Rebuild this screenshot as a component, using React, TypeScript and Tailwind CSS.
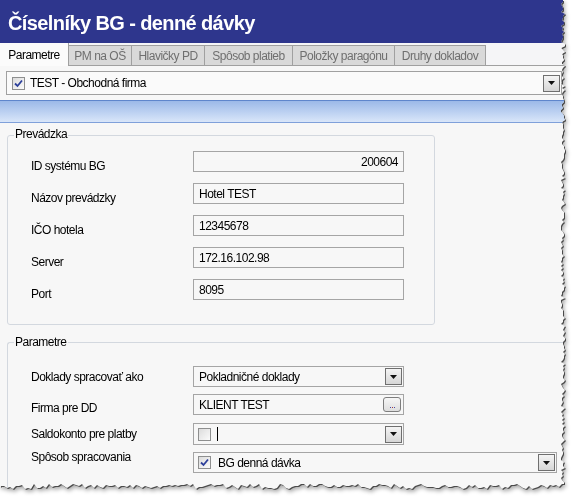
import React from "react";

const FONT = { fontFamily: '"Liberation Sans", Arial, sans-serif' };

function tornClip(): string {
  const pts: string[] = ["0px 0px"];
  let seed = 7;
  const rnd = () => {
    seed = (seed * 9301 + 49297) % 233280;
    return seed / 233280;
  };
  for (let y = 0; y <= 484; y += 2) {
    const x = 561 + Math.round(rnd() * 4);
    pts.push(`${x}px ${y}px`);
  }
  for (let x = 562; x >= 0; x -= 3) {
    const y = 484 + Math.round(rnd() * 5);
    pts.push(`${x}px ${y}px`);
  }
  pts.push("0px 487px");
  return `polygon(${pts.join(",")})`;
}

const clip = tornClip();

function DropBtn() {
  return (
    <div className="w-[17px] h-[17px] shrink-0 border border-[#6f6f6f] bg-gradient-to-b from-[#f4f4f4] to-[#d6d6d6] flex items-center justify-center">
      <svg width="7" height="4" viewBox="0 0 7 4">
        <path d="M0 0 H7 L3.5 4 Z" fill="#111" />
      </svg>
    </div>
  );
}

function Check({ checked }: { checked: boolean }) {
  return (
    <div className="w-[13px] h-[13px] shrink-0 border border-[#8e8f8f] bg-gradient-to-br from-[#dcdcdc] to-[#fbfbfb] flex items-center justify-center">
      {checked && (
        <svg width="9" height="9" viewBox="0 0 9 9">
          <path d="M1 4.5 L3.5 7 L8 1.5" stroke="#2c3f9a" strokeWidth="1.8" fill="none" />
        </svg>
      )}
    </div>
  );
}

function Field({ label, value, right }: { label: string; value: string; right?: boolean }) {
  return (
    <div className="flex items-start h-[32px]">
      <div className="w-[185px] pl-[23px] pt-[8px] text-[12px] text-black leading-[14px]">{label}</div>
      <div
        className={`w-[211px] h-[21px] border border-[#a5a5a5] flex items-center px-[5px] text-[12px] text-black ${
          right ? "justify-end" : ""
        }`}
      >
        {value}
      </div>
    </div>
  );
}

export default function App() {
  const tabs: [string, string][] = [
    ["PM na OŠ", "w-[63px]"],
    ["Hlavičky PD", "w-[73px]"],
    ["Spôsob platieb", "w-[88px]"],
    ["Položky paragónu", "w-[102px]"],
    ["Druhy dokladov", "w-[91px]"],
  ];
  return (
    <div className="w-[576px] h-[499px] bg-white relative overflow-hidden tracking-[-0.5px]" style={FONT}>
      <div className="[filter:drop-shadow(1px_1px_0_#4a4a4a)_drop-shadow(1px_2px_2px_rgba(0,0,0,0.35))]">
        <div className="w-[568px] h-[492px] bg-[#f7f7f7] flex flex-col overflow-hidden" style={{ clipPath: clip }}>
          {/* Title */}
          <div className="h-[43px] shrink-0 bg-[#2e368d] flex items-center pl-[8px] pt-[2px]">
            <span className="text-white font-bold text-[20px] tracking-[-0.6px]">Číselníky BG - denné dávky</span>
          </div>
          {/* Tabs */}
          <div className="h-[23px] shrink-0 bg-[#f5f5f7] flex items-end border-b border-[#a0a0a0]">
            <div className="h-[23px] w-[69px] bg-[#fbfbfb] border-r border-[#a0a0a0] flex items-center justify-center text-[12px] text-black -mb-px relative z-10 pt-[1px]">
              Parametre
            </div>
            {tabs.map(([t, w]) => (
              <div
                key={t}
                className={`${w} h-[20px] bg-[#d9d9d9] border-t border-r border-[#a0a0a0] flex items-center justify-center text-[12px] text-[#6f6f6f]`}
              >
                {t}
              </div>
            ))}
          </div>
          {/* Company combo */}
          <div className="h-[34px] shrink-0 flex items-start pt-[5px] pl-[6px] pr-[6px]">
            <div className="flex-1 h-[24px] border border-[#a0a0a0] bg-[#fafafa] flex items-center pl-[5px] pr-[1px]">
              <Check checked />
              <span className="ml-[5px] text-[12px] text-black flex-1">TEST - Obchodná firma</span>
              <DropBtn />
            </div>
          </div>
          {/* Blue bar */}
          <div className="h-[23px] shrink-0 border-t border-[#5f86cc] border-b border-b-[#7fa0da] bg-gradient-to-b from-[#9cb9e8] to-[#d9e6f9]" />
          {/* Prevádzka group */}
          <div className="shrink-0 pl-[7px] pt-[4px] w-[435px] relative">
            <div className="absolute left-[14px] top-[4px] px-[1px] bg-[#f7f7f7] text-[12px] leading-[14px] text-black">Prevádzka</div>
            <div className="mt-[8px] h-[190px] border border-[#d3d8df] rounded-[3px] pt-[15px]">
              <Field label="ID systému BG" value="200604" right />
              <Field label="Názov prevádzky" value="Hotel TEST" />
              <Field label="IČO hotela" value="12345678" />
              <Field label="Server" value="172.16.102.98" />
              <Field label="Port" value="8095" />
            </div>
          </div>
          {/* Parametre group */}
          <div className="shrink-0 pl-[7px] pt-[10px] relative">
            <div className="absolute left-[14px] top-[10px] px-[1px] bg-[#f7f7f7] text-[12px] leading-[14px] text-black">Parametre</div>
            <div className="mt-[7px] h-[160px] border-t border-l border-[#d3d8df] rounded-tl-[3px] pt-[23px]">
              <div className="flex items-start h-[28px]">
                <div className="w-[185px] pl-[23px] pt-[4px] text-[12px] leading-[14px] text-black">Doklady spracovať ako</div>
                <div className="w-[211px] h-[21px] border border-[#a5a5a5] flex items-center pl-[5px] pr-[1px] text-[12px] text-black">
                  <span className="flex-1">Pokladničné doklady</span>
                  <DropBtn />
                </div>
              </div>
              <div className="flex items-start h-[29px]">
                <div className="w-[185px] pl-[23px] pt-[7px] text-[12px] leading-[14px] text-black">Firma pre DD</div>
                <div className="w-[211px] h-[21px] border border-[#a5a5a5] flex items-center pl-[5px] pr-[2px] text-[12px] text-black">
                  <span className="flex-1">KLIENT TEST</span>
                  <div className="w-[18px] h-[15px] rounded-[3px] border border-[#7d7d7d] bg-gradient-to-b from-[#f6f6f6] to-[#dedede] flex items-end justify-center pb-[3px] gap-[1px]">
                    <span className="w-[1px] h-[1px] bg-[#4a4aa8]" />
                    <span className="w-[1px] h-[1px] bg-[#a03a3a]" />
                    <span className="w-[1px] h-[1px] bg-[#4a4aa8]" />
                  </div>
                </div>
              </div>
              <div className="flex items-start h-[29px]">
                <div className="w-[185px] pl-[23px] pt-[4px] text-[12px] leading-[14px] text-black">Saldokonto pre platby</div>
                <div className="w-[211px] h-[22px] border border-[#a5a5a5] flex items-center pl-[4px] pr-[1px] text-[12px] text-black">
                  <Check checked={false} />
                  <span className="ml-[6px] w-[1px] h-[14px] bg-black" />
                  <span className="flex-1" />
                  <DropBtn />
                </div>
              </div>
              <div className="flex items-start h-[28px]">
                <div className="w-[185px] pl-[23px] -mt-[2px] text-[12px] leading-[14px] text-black">Spôsob spracovania</div>
                <div className="w-[364px] h-[21px] border border-[#a5a5a5] flex items-center pl-[4px] pr-[1px] text-[12px] text-black">
                  <Check checked />
                  <span className="ml-[7px] flex-1">BG denná dávka</span>
                  <DropBtn />
                </div>
              </div>
            </div>
          </div>
        </div>
      </div>
    </div>
  );
}
